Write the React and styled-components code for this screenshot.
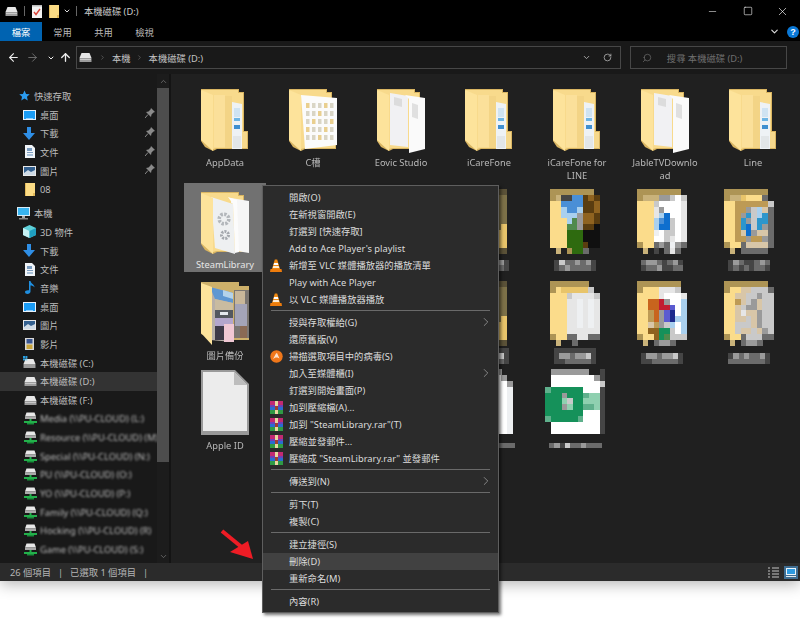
import React from "react";
import styled, { createGlobalStyle } from "styled-components";
import { ArrowLeft, ArrowRight, ArrowUp, ChevronDown, ChevronRight, ChevronUp, Minus, RotateCw, Search, Square, X } from "lucide-react";

const Global = createGlobalStyle`
  html, body { margin: 0; padding: 0; background: #fff; }
  body { font-family: "Noto Sans", "Noto Sans CJK TC", sans-serif; font-size: 9.3px; width: 800px; height: 619px; overflow: hidden; position: relative; }
`;

const Page = styled.div`position: relative; width: 800px; height: 619px; overflow: hidden; background: #fff;`;
const Window = styled.div`display: flex; flex-direction: column; height: 581px; background: #000; box-shadow: 0 3px 14px rgba(0,0,0,.3); color: #ddd;`;
const TitleBar = styled.div`display: flex; align-items: center; height: 22px; padding-left: 5px; flex: none;`;
const QuickIcon = styled.span`display: inline-flex; margin-right: ${p => p.$mr || 0}px;`;
const TitleSep = styled.span`width: 1px; height: 10px; background: #666; margin-right: ${p => p.$mr}px;`;
const TitleText = styled.span`font-size: 9.3px; color: #ccc; flex: 1;`;
const WinBtn = styled.span`display: flex; width: 35px; justify-content: center; color: #fff;`;
const TabsRow = styled.div`display: flex; align-items: center; height: 19px; flex: none; font-size: 9.3px;`;
const Tab = styled.div`width: ${p => p.$w || 41}px; height: 100%; display: flex; align-items: center; justify-content: center; color: ${p => p.$active ? "#fff" : "#bbb"}; background: ${p => p.$active ? "#0063b1" : "transparent"};`;
const Spring = styled.div`flex: 1;`;
const HelpDot = styled.span`width: 12px; height: 12px; border-radius: 50%; background: #0a78d6; color: #fff; font: bold 9px/12px "Liberation Sans", sans-serif; text-align: center; margin: 0 1px 0 7px;`;
const AddressRow = styled.div`display: flex; align-items: center; height: 33px; flex: none; background: #191919; padding-left: 6px;`;
const NavBtn = styled.span`display: flex; justify-content: center; width: ${p => p.$w}px; color: ${p => p.$dim ? "#777" : "#eee"};`;
const Field = styled.div`display: flex; align-items: center; height: 23px; box-sizing: border-box; border: 1px solid #474747; width: ${p => p.$w}px; margin-left: ${p => p.$ml}px; color: ${p => p.$muted ? "#6f6f6f" : "#c4c4c4"}; font-size: 9.3px;`;
const Crumb = styled.span``;
const Caret = styled.span`display: flex; color: #777; width: ${p => p.$w || 18}px; justify-content: center;`;
const FieldEnd = styled.span`display: flex; align-items: center; justify-content: center; flex: none; width: ${p => p.$w}px; color: ${p => p.$c || "#aaa"};`;
const MirrorIcon = styled.span`display: flex; transform: scaleX(-1);`;
const Main = styled.div`display: flex; flex: 1; min-height: 0; background: #202020;`;
const Nav = styled.div`width: 157px; flex: none; background: #191919; padding-top: 12.5px; overflow: hidden; box-sizing: border-box;`;
const NavRow = styled.div`position: relative; display: flex; align-items: center; height: 18.7px; padding-left: ${p => p.$left}px; margin-top: ${p => p.$gap || 0}px; background: ${p => p.$selected ? "#333" : "transparent"}; color: #bdbdbd; white-space: nowrap; overflow: hidden;`;
const NavIcon = styled.span`display: inline-flex; width: ${p => p.$w}px; flex: none; justify-content: flex-start;`;
const NavText = styled.span`font-size: 9.3px; filter: ${p => p.$blur ? "blur(.9px)" : "none"};`;
const Pin = styled.span`position: absolute; left: 145px; top: 3px; display: flex;`;
const ScrollTrack = styled.div`display: flex; flex-direction: column; align-items: center; width: 12px; flex: none; background: #1c1c1c; color: #777;`;
const ArrowCap = styled.span`display: flex; height: 14px; align-items: center; flex: none;`;
const Thumb = styled.div`width: 100%; height: 374px; background: #4d4d4d; flex: none;`;
const ScrollRest = styled.div`flex: 1;`;
const Divider = styled.div`width: 2px; flex: none; background: #141414;`;
const Grid = styled.div`flex: 1; display: grid; grid-template-columns: repeat(7, 82px); column-gap: 6px; grid-template-rows: 103px 90px 88px 88px; padding: 6px 0 0 13px; align-content: start;`;
const Item = styled.div`display: flex; flex-direction: column; align-items: center; height: ${p => p.$selected ? 89 : 80}px; padding-top: 9px; box-sizing: border-box; background: ${p => p.$selected ? "#717171" : "transparent"};`;
const IconBox = styled.div`height: 66px; display: flex; justify-content: center; flex: none; margin-top: ${p => -(p.$up || 0)}px; margin-right: ${p => -(p.$dx || 0) * 2}px;`;
const LabelMosaic = styled.div`display: flex; margin-top: ${p => p.$mt || 0}px; margin-right: ${p => -(p.$dx || 0) * 2}px;`;
const Label = styled.div`font-size: 9.3px; line-height: 13px; text-align: center; width: 70px; margin-top: ${p => p.$mt ?? 1}px; color: ${p => p.$selected ? "#e6e6e6" : "#b8b8b8"}; filter: ${p => p.$selected ? "none" : "blur(.6px)"}; overflow-wrap: anywhere;`;
const Status = styled.div`display: flex; align-items: center; height: 18px; flex: none; background: #2b2b2b; color: #b5b5b5; padding-left: 10px; font-size: 9.3px;`;
const StatusPart = styled.span`margin-right: 7px;`;
const ViewBtns = styled.div`display: flex; gap: 4px; margin-left: auto; margin-right: 2px;`;
const Menu = styled.div`position: absolute; left: 262px; top: 185px; width: 237px; height: 428px; box-sizing: border-box; padding-top: 2.5px; background: #2b2b2b; border: 1px solid #5e5e5e; box-shadow: 2px 2px 3px rgba(0,0,0,.55); color: #dcdcdc; font-size: 9.3px;`;
const MenuRow = styled.div`position: relative; display: flex; align-items: center; height: 17px; padding-left: 26px; background: ${p => p.$hover ? "#414141" : "transparent"};`;
const MenuIcon = styled.span`position: absolute; left: 7px; top: 2px; display: flex;`;
const SubArrow = styled.span`position: absolute; right: 5px; top: 1.5px; display: flex; color: #b5b5b5;`;
const MenuSep = styled.div`height: 1px; background: #6a6a6a; margin: 2.5px 8px;`;
const RedArrow = styled.svg`position: absolute; left: 216px; top: 525px;`;

/* ---------- drawings ---------- */
const Folder = ({ kind }) => (
  <svg width="48" height="64" viewBox="0 0 48 64">
    <path d="M0 0H38V3H43V42H47V60H16L12 62L4 58L0 52Z" fill="#d9b562" />
    <path d="M1 1H37V4H42V43H46V59H16L12 60L1 51Z" fill="#f8da8c" />
    {kind === "plain" && <g>
      <path d="M13 6H24V58H13Z" fill="#fbe09a" />
      <path d="M24 7H31V59H24Z" fill="#f3d486" />
      <path d="M31 13L41 15V60H31Z" fill="#eef2f5" />
      <rect x="33" y="19" width="6" height="9" fill="#cfe3f2" />
      <rect x="33" y="29" width="6" height="3" fill="#6db5e4" />
      <rect x="33" y="36" width="6" height="4" fill="#3f8fd0" />
      <rect x="32" y="47" width="8" height="12" fill="#e2e6e8" />
      <rect x="41" y="44" width="5" height="15" fill="#f6d88c" />
    </g>}
    {kind === "docs" && <g>
      <path d="M13 4L31 7V58L13 56Z" fill="#f1f1f3" />
      <path d="M28 6L48 9V60L32 64V10Z" fill="#fafafa" />
      <path d="M17 8L25 10V18L17 16Z" fill="#dcdcdc" />
      <path d="M35 14L41 16V30L35 28Z" fill="#e0e0e0" />
    </g>}
    {kind === "grid" && <g>
      <path d="M12 6L48 9V56L16 60Z" fill="#fbfbfb" />
      {[0,1,2,3,4].map(r => [0,1,2,3,4].map(c => <rect key={r+"-"+c} x={17+c*6} y={14+r*8} width="3.5" height="5" fill={(r+c)%3===0?"#e9cf8f":"#d9d5c5"} />))}
    </g>}
    {kind === "gear" && <g>
      <path d="M30 6L48 9V61L36 59V13L30 11Z" fill="#f6f6f6" />
      <path d="M10 5L32 12L34 62L14 56Z" fill="#eef0f1" />
      <path d="M27 5L36 8L38 60L34 61L32 12Z" fill="#fcfcfc" />
      <circle cx="23" cy="27" r="4.8" fill="none" stroke="#b3b7bb" strokeWidth="3.6" strokeDasharray="2.4 1.3" />
      <circle cx="24" cy="43" r="3.5" fill="none" stroke="#a4a8ad" strokeWidth="3" strokeDasharray="2 1.1" />
    </g>}
    <path d="M0 1L12 6V62L0 51Z" fill="#fde39b" />
  </svg>
);

const PAL = {
  a: "#ad9455", y: "#fbdc8b", g: "#e8c46a", s: "#c9b27a", b: "#4a8fd6", B: "#0f6fce", c: "#a9d0ee", C: "#2d96cc",
  w: "#ffffff", v: "#eef0f2", G: "#4f8a4c", D: "#2e6a0f", k: "#101010", n: "#5a3d10", N: "#8f6320",
  l: "#c9c9c9", L: "#9a9a9a", m: "#6b6b6b", d: "#454545", r: "#c21c30", o: "#c8641e", p: "#5b5bd0", P: "#1c2a8c",
  t: "#bd9a55", T: "#d8c6a8", e: "#15915a", E: "#8fd0b0", h: "#5fb08c", f: "#e6e6e6", O: "#7d7148", Q: "#5b5238",
};
const Mosaic = ({ rows, w = 5.5, h = 5.9 }) => {
  const cols = rows[0].length;
  return (
    <svg width={cols * w} height={rows.length * h} viewBox={`0 0 ${cols * w} ${rows.length * h}`} shapeRendering="crispEdges">
      {rows.flatMap((row, y) => row.split("").map((ch, x) => PAL[ch]
        ? <rect key={x + "," + y} x={x * w} y={y * h} width={w + .2} height={h + .2} fill={PAL[ch]} /> : null))}
    </svg>
  );
};
const M = {
  green: ["aaaaaaaa.", "asddbbnNn", "yybbbbnnN", "yycbbcnnN", "yycccLNNn", "yyycGLNNn", "yyyGGLnnk", "yyyDDDkkk", "yyyDDDkkk", "yyyDDDnkk", ".s.aDDm.."],
  blue: ["aaaaaaaa.", "asssLLlwl", "yyylwwwwf", "yyyfLwwwf", "yyyfcBwwf", "yyycbBlwf", "yyycBBlwf", "yyyvwllwf", "yyywwlfwf", "ayymLmvLm", ".s.d.mfm."],
  tan: ["aaaaaaaa.", "assgyyym.", "yyttttttl", "yyttLlcTm", "yytLClcCm", "yytCLlCCm", "yytCBlCLm", "yytTBLTTm", "yyttLttLm", "ayymTTTTm", ".s.mmmmm."],
  white: ["aaaaaaa..", "aygggggl.", "yyylffffl", "yyyffvfvf", "yyyffvfvf", "yyyffvfvf", "yyyffvfvf", "yyyffvfvf", "yyyffffff", "ayymmffmm", ".s..m...."],
  red: ["aaaaaaaa.", "ayyyfffl.", "yyyyfwwwf", "yyoorLwwc", "yyoorrpwc", "yytoLpPwc", "yytoLpPcc", "yyTtLlcwc", "yyNNeelwc", "ayyNeGlll", ".s.mLLm.."],
  grey: ["aaaaaaaa.", "ayyTTlllm", "yyTTllLll", "yytTlLTll", "yyTlLLTll", "yyTfTTLll", "yyTTlTLll", "yylllTLll", "yylTTlTLl", "ayymlllmm", ".s.mLLm.."],
  tile: ["QQQQQQQQ.", "OOOOOOOO.", "OOOOOOOO.", "OOOOOOOO.", "OOOOOOOO.", "OOOOOOOO.", "OOOOOOOg.", "OOOOOOgg.", "OOOOOOgg.", "OOOOOOgg.", "QQQQQQQQ."],
  file: ["LLLLLLL..", "wwwwwwwL.", "wwwwwwwwL", "wwwwwwwwv", "wwwwwwwwv", "wwwwwwwwv", "wwwwwwwwv", "wwwwwwwwv", "wwwwwwwwv", "wwwwwwwwv", "wwwwwwwwv"],
  excel: [".LLLLLLL..d", ".wwwwwwwwLd", ".wwwwwwwwwl", "heeeeeewwwd", "eeeLeeehEEd", "eeeEleeEEEd", "eeeLEeehhEd", "eeeeeeewwwd", "heeeeehwwwd", ".wwwwwwwwwd", ".wwwwwwwwwd"],
};
const ML = {
  a: ["dlmmLmLd", "dmLmmmmd"],
  b: ["mLLmdmLd", "dmmLddmm"],
  c: ["dLmddmLm", "dmdmdmmd"],
  e: ["dddddddd", "dLLmLLld", "ddmmmmmd"],
  f: ["........", "dLLmLLld", "ddmmmmmd"],
  g: ["........", "dLmLmmLd", "mmmmmmmd"],
  h: ["mLdlmmLmmm"],
};

const Doc = () => (
  <svg width="48" height="65" viewBox="0 0 48 65">
    <path d="M0 0H34L48 14V65H0Z" fill="#9a9a9a" />
    <path d="M2 2H33L46 15V61H2Z" fill="#ececec" />
    <path d="M33 2V15H46Z" fill="#bdbdbd" />
  </svg>
);

const Photo = () => (
  <svg width="48" height="64" viewBox="0 0 48 64">
    <path d="M0 0H38V4H48V58H17L0 52Z" fill="#cdb06a" />
    <rect x="33" y="8" width="15" height="48" fill="#7b7672" />
    <path d="M34 9H44V22H34Z" fill="#c9b79a" />
    <path d="M34 22H46V44H34Z" fill="#a4a4b8" />
    <path d="M39 44H46V56H39Z" fill="#8a6a55" />
    <path d="M9 5L32 11V60L9 58Z" fill="#b8b0a8" />
    <path d="M9 5L32 11V21L14 17Z" fill="#5f97d2" />
    <path d="M22 8L32 11V17L22 14Z" fill="#b4d2ea" />
    <path d="M14 17L32 21V30L14 28Z" fill="#c9bba0" />
    <path d="M14 28H32V36H14Z" fill="#54585f" />
    <rect x="19" y="30" width="8" height="3" fill="#e4e8ee" />
    <rect x="14" y="36" width="18" height="8" fill="#b3a6cc" />
    <rect x="23" y="42" width="10" height="18" fill="#f0c8d4" />
    <rect x="14" y="44" width="9" height="14" fill="#3e3a48" />
    <path d="M0 1L11 5V63L0 51Z" fill="#fde39b" />
  </svg>
);

const Glyph = {
  drive: (
    <svg width="13" height="11" viewBox="0 0 13 11">
      <path d="M2.5 1H10.5L12.5 6H.5Z" fill="#e6e6e6" />
      <rect x=".5" y="6" width="12" height="4" fill="#9c9c9c" />
      <rect x="1" y="7" width="11" height="1" fill="#c8c8c8" />
    </svg>
  ),
  driveC: (
    <svg width="13" height="13" viewBox="0 0 13 13">
      <path d="M2.5 3H10.5L12.5 8H.5Z" fill="#e6e6e6" />
      <rect x=".5" y="8" width="12" height="4" fill="#9c9c9c" />
      <rect x="0" y="0" width="2" height="2" fill="#2a9fe0" /><rect x="2.4" y="0" width="2" height="2" fill="#2a9fe0" />
      <rect x="0" y="2.4" width="2" height="2" fill="#2a9fe0" /><rect x="2.4" y="2.4" width="2" height="2" fill="#7fd0f0" />
    </svg>
  ),
  net: (
    <svg width="13" height="13" viewBox="0 0 13 13">
      <path d="M2.5 .5H10.5L12 4.5H1Z" fill="#e8e8e8" />
      <rect x="1" y="4.5" width="11" height="2.5" fill="#aaa" />
      <rect x="5.5" y="7" width="2" height="2.5" fill="#23b04b" />
      <rect x="0" y="9" width="13" height="2" fill="#23b04b" />
      <rect x="3" y="11" width="7" height="1.5" fill="#17903a" />
    </svg>
  ),
  star: (
    <svg width="11" height="11" viewBox="0 0 24 24"><path d="M12 1l3.4 7.5 8 .9-6 5.4 1.7 8L12 18.6 4.900 22.800l1.700-8-6-5.400 8-.9z" fill="#2b9cf0" /></svg>
  ),
  desktop: (
    <svg width="13" height="10" viewBox="0 0 13 10"><rect width="13" height="10" fill="#e8f2fb" /><rect x="1" y="1" width="11" height="8" fill="#1a9cf5" /><rect x="3" y="8" width="7" height="1" fill="#8fd0ff" /></svg>
  ),
  down: (
    <svg width="12" height="13" viewBox="0 0 12 13"><path d="M4 0H8V6H12L6 13L0 6H4Z" fill="#2f8fe6" /></svg>
  ),
  doc: (
    <svg width="10" height="13" viewBox="0 0 10 13"><path d="M0 0H7L10 3V13H0Z" fill="#f0f4f8" /><rect x="2" y="3" width="5" height="3" fill="#7a9cc0" /><rect x="2" y="7" width="6" height="1" fill="#7a9cc0" /><rect x="2" y="9" width="6" height="2" fill="#a7c0d8" /></svg>
  ),
  pic: (
    <svg width="13" height="10" viewBox="0 0 13 10"><rect width="13" height="10" fill="#e8e8e8" /><rect x="1" y="1" width="11" height="8" fill="#33608f" /><path d="M1 7L5 4L8 6L12 4V9H1Z" fill="#cfdbe6" /></svg>
  ),
  yfolder: (
    <svg width="10" height="13" viewBox="0 0 10 13"><path d="M0 0H10V13H0Z" fill="#fcdc85" /><path d="M0 0H1V13H0Z" fill="#e2b95a" /><path d="M8 10H10V13H8Z" fill="#e2b95a" /></svg>
  ),
  pc: (
    <svg width="13" height="13" viewBox="0 0 13 13"><rect width="13" height="9" fill="#d8ecf8" /><rect x="1" y="1" width="11" height="7" fill="#38b4f0" /><rect x="5" y="9" width="3" height="2" fill="#aaa" /><rect x="2" y="11" width="9" height="1.5" fill="#888" /></svg>
  ),
  cube: (
    <svg width="13" height="13" viewBox="0 0 13 13"><path d="M6.5 0L13 3V10L6.5 13L0 10V3Z" fill="#5fd0d8" /><path d="M0 3L6.5 6V13L0 10Z" fill="#c6f1f3" /><path d="M13 3L6.5 6V13L13 10Z" fill="#1f9fc0" /></svg>
  ),
  music: (
    <svg width="10" height="13" viewBox="0 0 10 13"><path d="M4 0H5.5C6 3 9.5 3 9.5 6.5C8.5 5 7 4.5 5.5 4.5V10.5C5.5 12 4 13 2.5 13C1 13 0 12.2 0 11C0 9.8 1.5 9 4 9.3Z" fill="#1f8fe0" /></svg>
  ),
  video: (
    <svg width="9" height="12" viewBox="0 0 9 12"><rect width="9" height="12" fill="#d8d8d8" /><rect x="1.5" y="1" width="6" height="4.5" fill="#39558f" /><rect x="1.5" y="6.5" width="6" height="4.5" fill="#c9a53c" /></svg>
  ),
  pin: (
    <svg width="10" height="10" viewBox="0 0 10 10"><path d="M6 0L10 4L8.5 4.5L6.5 6.5L6 9L1 4L3.5 3.5L5.5 1.5Z" fill="#8a8a8a" /><path d="M3 6.5L0 10" stroke="#8a8a8a" strokeWidth="1" /></svg>
  ),
  notepad: (
    <svg width="10" height="13" viewBox="0 0 10 13"><rect width="10" height="13" fill="#f2f2f2" /><rect y="0" width="10" height="1.5" fill="#bbb" /><path d="M2 7L4 9.5L8 4" fill="none" stroke="#d9453a" strokeWidth="1.4" /></svg>
  ),
  cone: (
    <svg width="12" height="13" viewBox="0 0 12 13"><path d="M4.8 .5H7.2L10 10H2Z" fill="#f08a12" /><path d="M4.1 4H7.9L8.4 6H3.5Z" fill="#fff" /><path d="M3.3 7H8.7L9.3 9H2.7Z" fill="#fff" opacity=".85" /><path d="M0.5 10H11.5L12 13H0Z" fill="#ee7c0c" /></svg>
  ),
  avast: (
    <svg width="13" height="13" viewBox="0 0 13 13"><circle cx="6.5" cy="6.5" r="6.2" fill="#f0771a" /><path d="M3 9L6 3.5L7 3L9.5 8.5L7.5 7.5L5.5 7.5Z" fill="#fbe3cc" /></svg>
  ),
  rar: (
    <svg width="13" height="13" viewBox="0 0 13 13">
      <rect y="0" width="13" height="4" fill="#c22a72" /><rect y="4" width="13" height="2" fill="#7040b8" />
      <rect y="6" width="13" height="3" fill="#2a6cd0" /><rect y="9" width="13" height="4" fill="#2f9a45" />
      <rect x="5" y="0" width="3" height="13" fill="#e8d8a0" /><rect x="5" y="5" width="3" height="4" fill="#a04030" />
    </svg>
  ),
  viewList: (
    <svg width="13" height="13" viewBox="0 0 13 13"><path d="M1 2H3M5 2H12M1 5H3M5 5H12M1 8H3M5 8H12M1 11H3M5 11H12" stroke="#c4c4c4" strokeWidth="1.2" /></svg>
  ),
  viewThumb: (
    <svg width="14" height="13" viewBox="0 0 14 13"><rect width="14" height="13" fill="#3f6d91" /><rect x="2" y="2" width="10" height="7" fill="#eaf4fb" /><rect x="3" y="3" width="8" height="5" fill="#2e9ae0" /><rect x="2" y="10" width="10" height="1" fill="#dfe9ef" /></svg>
  ),
};

const navItems = [
  { left: 19, w: 15, icon: "star", text: "快速存取" },
  { left: 23, w: 17, icon: "desktop", text: "桌面", pin: true },
  { left: 23, w: 17, icon: "down", text: "下載", pin: true },
  { left: 25, w: 15, icon: "doc", text: "文件", pin: true },
  { left: 23, w: 17, icon: "pic", text: "圖片", pin: true },
  { left: 25, w: 15, icon: "yfolder", text: "08" },
  { left: 17, w: 17, icon: "pc", text: "本機", gap: 5.2 },
  { left: 23, w: 17, icon: "cube", text: "3D 物件" },
  { left: 23, w: 17, icon: "down", text: "下載" },
  { left: 25, w: 15, icon: "doc", text: "文件" },
  { left: 25, w: 15, icon: "music", text: "音樂" },
  { left: 23, w: 17, icon: "desktop", text: "桌面" },
  { left: 23, w: 17, icon: "pic", text: "圖片" },
  { left: 25, w: 15, icon: "video", text: "影片" },
  { left: 23, w: 17, icon: "driveC", text: "本機磁碟 (C:)" },
  { left: 24, w: 16, icon: "drive", text: "本機磁碟 (D:)", selected: true },
  { left: 24, w: 16, icon: "drive", text: "本機磁碟 (F:)" },
  { left: 24, w: 16, icon: "net", text: "Media (\\\\PU-CLOUD) (L:)", blur: true },
  { left: 24, w: 16, icon: "net", text: "Resource (\\\\PU-CLOUD) (M)", blur: true },
  { left: 24, w: 16, icon: "net", text: "Special (\\\\PU-CLOUD) (N:)", blur: true },
  { left: 24, w: 16, icon: "net", text: "PU (\\\\PU-CLOUD) (O:)", blur: true },
  { left: 24, w: 16, icon: "net", text: "YO (\\\\PU-CLOUD) (P:)", blur: true },
  { left: 24, w: 16, icon: "net", text: "Family (\\\\PU-CLOUD) (Q:)", blur: true },
  { left: 24, w: 16, icon: "net", text: "Hocking (\\\\PU-CLOUD) (R)", blur: true },
  { left: 24, w: 16, icon: "net", text: "Game (\\\\PU-CLOUD) (S:)", blur: true },
];

const files = [
  { kind: "plain", name: "AppData" }, { kind: "grid", name: "C槽" }, { kind: "docs", name: "Eovic Studio" },
  { kind: "plain", name: "iCareFone" }, { kind: "plain", name: "iCareFone for LINE" },
  { kind: "docs", name: "JableTVDownload" }, { kind: "plain", name: "Line" },
  { kind: "gear", name: "SteamLibrary", selected: true, mt: 0 },
  { m: "tile" }, { m: "tile" }, { m: "tile", l: "a", up: 3, dx: -1, lm: 5 },
  { m: "green", l: "a", up: 3, dx: -2, lm: 5 }, { m: "blue", l: "b", up: 3, dx: -3, lm: 5 }, { m: "tan", l: "c", up: 3, dx: -4, lm: 5 },
  { photo: true, name: "圖片備份", mt: 1 }, { m: "tile" }, { m: "tile" }, { m: "tile", l: "e", up: 1, dx: -1, lm: 1 },
  { m: "white", l: "e", up: 1, dx: -2, lm: 1 }, { m: "red", l: "f", up: 1, dx: -3, lm: 1 }, { m: "grey", l: "g", up: 1, dx: -4, lm: 1 },
  { doc: true, name: "Apple ID", mt: 3 }, { m: "file" }, { m: "file" }, { m: "file", l: "h", dx: -1, up: 1, lm: 8 },
  { m: "excel", l: "h", up: 1, dx: -2, lm: 8 },
];

const menu = [
  { t: "開啟(O)" }, { t: "在新視窗開啟(E)" }, { t: "釘選到 [快速存取]" }, { t: "Add to Ace Player's playlist" },
  { t: "新增至 VLC 媒體播放器的播放清單", i: "cone" }, { t: "Play with Ace Player" }, { t: "以 VLC 媒體播放器播放", i: "cone" }, "-",
  { t: "授與存取權給(G)", sub: true }, { t: "還原舊版(V)" }, { t: "掃描選取項目中的病毒(S)", i: "avast" },
  { t: "加入至媒體櫃(I)", sub: true }, { t: "釘選到開始畫面(P)" }, { t: "加到壓縮檔(A)...", i: "rar" },
  { t: "加到 \"SteamLibrary.rar\"(T)", i: "rar" }, { t: "壓縮並發郵件...", i: "rar" }, { t: "壓縮成 \"SteamLibrary.rar\" 並發郵件", i: "rar" }, "-",
  { t: "傳送到(N)", sub: true }, "-", { t: "剪下(T)" }, { t: "複製(C)" }, "-",
  { t: "建立捷徑(S)" }, { t: "刪除(D)", hover: true }, { t: "重新命名(M)" }, "-", { t: "內容(R)" },
];

export default function App() {
  return (
    <Page>
      <Global />
      <Window>
        <TitleBar>
          <QuickIcon $mr={6}>{Glyph.drive}</QuickIcon>
          <TitleSep $mr={7} />
          <QuickIcon $mr={7}>{Glyph.notepad}</QuickIcon>
          <QuickIcon $mr={4}>{Glyph.yfolder}</QuickIcon>
          <QuickIcon $mr={5}><ChevronDown size={8} color="#ddd" strokeWidth={3} /></QuickIcon>
          <TitleSep $mr={7} />
          <TitleText>本機磁碟 (D:)</TitleText>
          <WinBtn><Minus size={11} strokeWidth={1.2} /></WinBtn>
          <WinBtn><Square size={10} strokeWidth={1.4} /></WinBtn>
          <WinBtn><X size={13} strokeWidth={1.2} /></WinBtn>
        </TitleBar>
        <TabsRow>
          <Tab $active $w={42}>檔案</Tab>
          <Tab>常用</Tab>
          <Tab>共用</Tab>
          <Tab>檢視</Tab>
          <Spring />
          <ChevronDown size={11} color="#ddd" strokeWidth={2.5} />
          <HelpDot>?</HelpDot>
        </TabsRow>
        <AddressRow>
          <NavBtn $w={15}><ArrowLeft size={13} strokeWidth={2} /></NavBtn>
          <NavBtn $w={22} $dim><ArrowRight size={13} strokeWidth={1.6} /></NavBtn>
          <NavBtn $w={15}><ChevronDown size={8} strokeWidth={3} /></NavBtn>
          <NavBtn $w={15}><ArrowUp size={13} strokeWidth={2.4} /></NavBtn>
          <Field $w={545} $ml={3}>
            <FieldEnd $w={16}>{Glyph.drive}</FieldEnd>
            <Caret $w={19}><ChevronRight size={7} strokeWidth={2} /></Caret>
            <Crumb>本機</Crumb>
            <Caret $w={18}><ChevronRight size={7} strokeWidth={2} /></Caret>
            <Crumb>本機磁碟 (D:)</Crumb>
            <Spring />
            <FieldEnd $w={16} $c="#aaa"><ChevronDown size={9} strokeWidth={2.5} /></FieldEnd>
            <FieldEnd $w={26} $c="#bbb"><RotateCw size={9} strokeWidth={2} /></FieldEnd>
          </Field>
          <Field $w={157} $ml={9} $muted>
            <FieldEnd $w={31} $c="#777"><MirrorIcon><Search size={10} strokeWidth={1.5} /></MirrorIcon></FieldEnd>
            <Crumb style={{ marginLeft: 0 }}>&nbsp;&nbsp;搜尋 本機磁碟 (D:)</Crumb>
          </Field>
        </AddressRow>
        <Main>
          <Nav>
            {navItems.map((n, i) => (
              <NavRow key={i} $left={n.left} $gap={n.gap} $selected={n.selected}>
                <NavIcon $w={n.w}>{Glyph[n.icon]}</NavIcon>
                <NavText $blur={n.blur}>{n.text}</NavText>
                {n.pin && <Pin>{Glyph.pin}</Pin>}
              </NavRow>
            ))}
          </Nav>
          <ScrollTrack>
            <ArrowCap><ChevronUp size={9} strokeWidth={2} /></ArrowCap>
            <Thumb />
            <ScrollRest />
            <ArrowCap><ChevronDown size={9} strokeWidth={2} /></ArrowCap>
          </ScrollTrack>
          <Divider />
          <Grid>
            {files.map((f, i) => (
              <Item key={i} $selected={f.selected}>
                <IconBox $up={f.up} $dx={f.dx}>
                  {f.kind && <Folder kind={f.kind} />}
                  {f.photo && <Photo />}
                  {f.doc && <Doc />}
                  {f.m && <Mosaic rows={M[f.m]} />}
                </IconBox>
                {f.name && <Label $selected={f.selected} $mt={f.mt}>{f.name}</Label>}
                {f.l && <LabelMosaic $mt={f.lm} $dx={f.dx}><Mosaic rows={ML[f.l]} w={5.3} h={5.3} /></LabelMosaic>}
              </Item>
            ))}
          </Grid>
        </Main>
        <Status>
          <StatusPart>26 個項目</StatusPart>
          <StatusPart>|</StatusPart>
          <StatusPart>已選取 1 個項目</StatusPart>
          <StatusPart>|</StatusPart>
          <ViewBtns>{Glyph.viewList}{Glyph.viewThumb}</ViewBtns>
        </Status>
      </Window>
      <Menu>
        {menu.map((m, i) => m === "-" ? <MenuSep key={i} /> : (
          <MenuRow key={i} $hover={m.hover}>
            {m.i && <MenuIcon>{Glyph[m.i]}</MenuIcon>}
            {m.t}
            {m.sub && <SubArrow><ChevronRight size={14} strokeWidth={1.1} /></SubArrow>}
          </MenuRow>
        ))}
      </Menu>
      <RedArrow width="44" height="40" viewBox="0 0 44 40">
        <path d="M6 6L28 24" stroke="#ee1c25" strokeWidth="4" />
        <path d="M37 34L14 27L32 16Z" fill="#ee1c25" />
      </RedArrow>
    </Page>
  );
}
